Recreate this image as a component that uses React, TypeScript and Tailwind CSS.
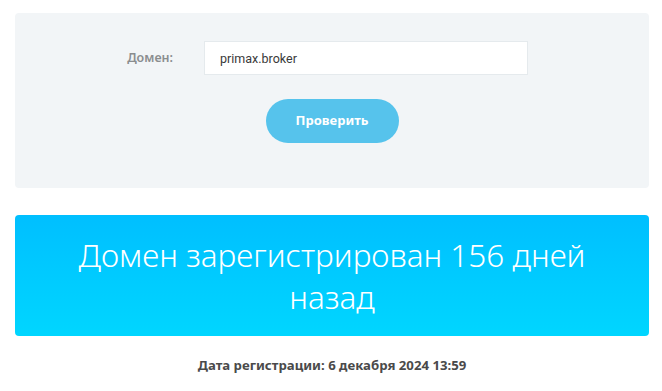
import React, { useState } from 'react';

const headFont = { fontFamily: '"Noto Sans", "DejaVu Sans", sans-serif' };

const DomainCheck: React.FC = () => {
  const [domain, setDomain] = useState('primax.broker');

  return (
    <div className="bg-[#f2f5f7] rounded-[4px] pt-[28px] pb-[45px]">
      <div className="flex items-center pl-[98px]">
        <label className="w-[60px] text-right text-[12.5px] font-semibold text-[#8a8d8f] font-['Noto_Sans',sans-serif]">
          Домен:
        </label>
        <input
          type="text"
          value={domain}
          onChange={e => setDomain(e.target.value)}
          className="ml-[31px] w-[324px] h-[34px] bg-white border border-[#e5eaed] px-[15px] text-[12.5px] text-[#3a3a3a] font-['Roboto',sans-serif] focus:outline-none"
        />
      </div>
      <div className="flex justify-center mt-[24px]">
        <button className="w-[133px] h-[44px] rounded-full bg-[#56c3ec] text-white text-[13px] font-bold font-['Noto_Sans',sans-serif]">
          Проверить
        </button>
      </div>
    </div>
  );
}

export default function App() {
  return (
    <div className="w-[662px] h-[391px] bg-white pl-[15px] pr-[13px] pt-[13px]">
      <DomainCheck />
      <div
        className="mt-[27px] h-[121px] rounded-[4px] bg-gradient-to-b from-[#00bfff] to-[#00d6ff] flex items-center justify-center px-[50px] text-center text-white text-[31.5px] font-light leading-[42px]"
        style={headFont}
      >
        Домен зарегистрирован 156 дней назад
      </div>
      <p className="mt-[20px] text-center text-[13.2px] font-bold text-[#4a4a4a] font-['Noto_Sans',sans-serif]">
        Дата регистрации: 6 декабря 2024 13:59
      </p>
    </div>
  );
}
